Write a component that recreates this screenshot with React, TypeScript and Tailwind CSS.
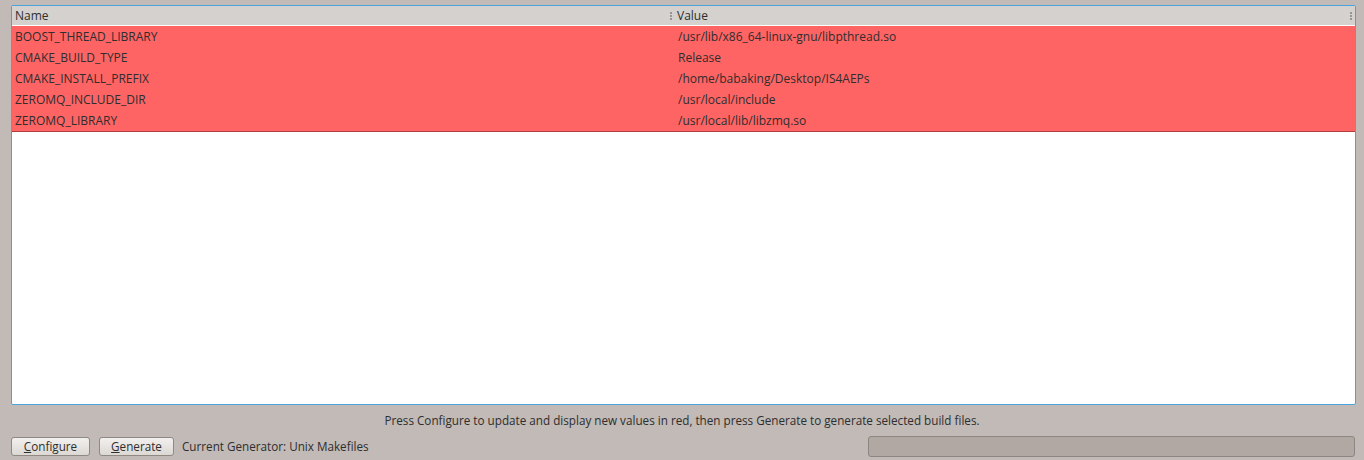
const rows: [string, string][] = [
  ['BOOST_THREAD_LIBRARY', '/usr/lib/x86_64-linux-gnu/libpthread.so'],
  ['CMAKE_BUILD_TYPE', 'Release'],
  ['CMAKE_INSTALL_PREFIX', '/home/babaking/Desktop/IS4AEPs'],
  ['ZEROMQ_INCLUDE_DIR', '/usr/local/include'],
  ['ZEROMQ_LIBRARY', '/usr/local/lib/libzmq.so'],
];

function Grip() {
  return (
    <span className="flex flex-col gap-[1px] w-[2px] mr-[3px]">
      <span className="h-[2px] w-[2px] bg-[#9a9490]" />
      <span className="h-[2px] w-[2px] bg-[#9a9490]" />
      <span className="h-[2px] w-[2px] bg-[#9a9490]" />
    </span>
  );
}

export default function App() {
  return (
    <div
      className="w-[1364px] h-[460px] bg-[#c1bab6] text-[#2e2e2e] text-[11.7px] flex flex-col"
      style={{ fontFamily: '"Open Sans", "DejaVu Sans", sans-serif' }}
    >
      <div className="pl-[11px] pr-[8px] pt-[5px]">
        <div className="h-[400px] border border-[#4aa3dc] rounded-[2px] bg-white flex flex-col overflow-hidden text-[12px]">
          <div className="h-[19px] bg-[#d5d1ce] flex items-center pt-[1px]">
            <div className="w-[663px] pl-[3px] flex items-center justify-between">
              <span>Name</span>
              <Grip />
            </div>
            <div className="flex-1 pl-[2px] flex items-center justify-between">
              <span>Value</span>
              <Grip />
            </div>
          </div>
          <div className="h-[1px] bg-white" />
          <div className="bg-[#ff6464] border-b border-[#b04040]">
            {rows.map(([n, v]) => (
              <div key={n} className="h-[21px] flex items-center">
                <div className="w-[666px] pl-[3px]">{n}</div>
                <div className="flex-1">{v}</div>
              </div>
            ))}
          </div>
        </div>
      </div>
      <div className="h-[31px] flex items-center justify-center pt-[1px]">
        Press Configure to update and display new values in red, then press Generate to generate selected build files.
      </div>
      <div className="flex items-center pl-[11px] pr-[9px] gap-[10px]">
        <button className="h-[19px] w-[79px] rounded-[3px] border border-[#8f8883] bg-gradient-to-b from-[#f2f0ee] to-[#dcd8d4] flex items-center justify-center">
          <span><span className="underline">C</span>onfigure</span>
        </button>
        <button className="h-[19px] w-[75px] -ml-[1px] rounded-[3px] border border-[#8f8883] bg-gradient-to-b from-[#f2f0ee] to-[#dcd8d4] flex items-center justify-center">
          <span><span className="underline">G</span>enerate</span>
        </button>
        <span className="-ml-[2px]">Current Generator: Unix Makefiles</span>
        <div className="ml-auto h-[21px] w-[487px] rounded-[3px] border border-[#8c8580] bg-[#b1a8a4]" />
      </div>
    </div>
  );
}
